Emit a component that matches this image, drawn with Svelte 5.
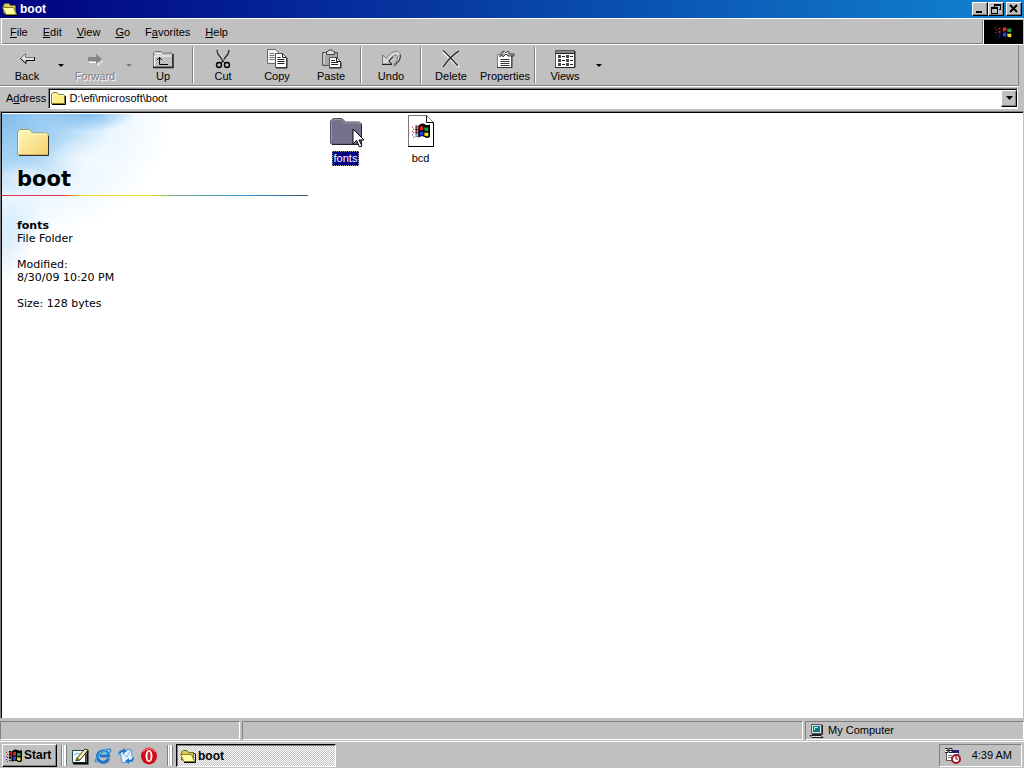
<script>
  const menus = [
    ['', 'F', 'ile'],
    ['', 'E', 'dit'],
    ['', 'V', 'iew'],
    ['', 'G', 'o'],
    ['F', 'a', 'vorites'],
    ['', 'H', 'elp']
  ];
  const tools = [
    { id: 'back', label: 'Back', drop: true },
    { id: 'forward', label: 'Forward', drop: true, disabled: true },
    { id: 'up', label: 'Up' },
    { sep: true },
    { id: 'cut', label: 'Cut' },
    { id: 'copy', label: 'Copy' },
    { id: 'paste', label: 'Paste' },
    { sep: true },
    { id: 'undo', label: 'Undo' },
    { sep: true },
    { id: 'delete', label: 'Delete' },
    { id: 'properties', label: 'Properties' },
    { sep: true },
    { id: 'views', label: 'Views', drop: true }
  ];
  const quick = [
    { id: 'desktop', label: 'Show Desktop' },
    { id: 'ie', label: 'Internet Explorer' },
    { id: 'mail', label: 'Outlook Express' },
    { id: 'opera', label: 'Opera' }
  ];
  let path = $state('D:\\efi\\microsoft\\boot');
  let selected = $state('fonts');
</script>

{#snippet smallFolder()}
  <svg width="16" height="16" viewBox="0 0 16 16" aria-hidden="true">
    <path d="M1.5 13.5V4L3 2.500h4L8.500 4.500h5l1 1v8z" fill="#ffee88" stroke="#80762c" />
    <path d="M2.500 12V5.500L3.500 4h3L8 5.500h5" fill="none" stroke="#fffbd0" />
    <path d="M2 14.500h13.500V6" fill="none" stroke="#000" />
  </svg>
{/snippet}

{#snippet openFolder()}
  <svg width="16" height="16" viewBox="0 0 16 16" aria-hidden="true">
    <path d="M1.500 12V4L3 2.500h4L8.500 4.500h5v8z" fill="#d8cc50" stroke="#77702c" />
    <path d="M.5 6.500h11l3 7H4z" fill="#ffffa0" stroke="#8b812d" />
    <path d="M4 14.500h11.500V6l-2-1" fill="none" stroke="#000" />
  </svg>
{/snippet}

{#snippet flag(size)}
  <svg width={size} height={size} viewBox="0 0 16 16" aria-hidden="true">
    <path d="M5.500 3.500C8 1 10 1 11.500 2S14 3 16 2v11c-2 1.500-3 1.500-4.500.5s-3-1.500-6 .5z" fill="#000" />
    <path d="M7 4.500C8 3.700 9 3.500 10 4v3.500c-1-.5-2-.4-3 .3z" fill="#e82820" />
    <path d="M11 4.500c1 .6 2 .7 3.500.2v3.200c-1.500.5-2.500.3-3.500-.4z" fill="#20a040" />
    <path d="M7 9c1-.7 2-.8 3-.4v3.500c-1-.5-2-.4-3 .2z" fill="#2444e8" />
    <path d="M11 9c1 .7 2 .8 3.500.3v3.200c-1.500.4-2.500.2-3.500-.5z" fill="#f4e02c" />
    <path d="M3 4h2v2H3zM3 7h2v2H3z" fill="#b02030" />
    <path d="M3 10h2v1H3zM3 12h2v1H3z" fill="#2030a0" />
    <path d="M0 4h1v1H0zM1 6h1v1H1zM0 8h1v1H0z" fill="#c03040" />
    <path d="M0 11h1v1H0zM1 13h1v1H1zM1 9h1v1H1z" fill="#2030a0" />
    <path d="M3 3h2v1H3zM3 6h2v1H3zM3 9h2v1H3z" fill="#000" />
  </svg>
{/snippet}

{#snippet toolIcon(id)}
  <svg class="tool-icon" width="22" height="20" viewBox="0 0 22 20" aria-hidden="true">
    {#if id === 'back'}
      <path d="M5 9.500 10 4.500v3.500h8v3h-8v4z" fill="#e0e0e0" />
      <path d="M9.500 4.500 4.500 9.500M9.500 5v3.500h8" fill="none" stroke="#777" />
      <path d="m4.500 9.500 5.500 5v-3h8.500V8" fill="none" stroke="#000" />
    {:else if id === 'forward'}
      <path d="m19 11.500-5 5v-3H6v-4h1" fill="none" stroke="#fff" />
      <path d="M4 8h8V5l6 5-6 5v-3H4z" fill="#858585" />
    {:else if id === 'up'}
      <path d="M1.500 18V4L3 2.500h6L10.500 4h9L20.500 5v13z" fill="#c0c0c0" stroke="#777" />
      <path d="M2.500 17V7h17" fill="none" stroke="#fff" />
      <path d="M3 4.500h6l1 1" fill="none" stroke="#fff" />
      <path d="M1 18.500h20V5" fill="none" stroke="#222" stroke-width="1.500" />
      <path d="M7.500 8.500v7H14M5 11l2.500-2.500L10 11M14 15.500h2" fill="none" stroke="#000" />
    {:else if id === 'cut'}
      <path d="m5 1 1 4 7 9M17 1l-1 4-7 9" fill="none" stroke="#333" stroke-width="1.500" />
      <path d="m6 2 7 11" stroke="#eee" stroke-width=".7" />
      <ellipse cx="7" cy="16" rx="2.500" ry="2.500" fill="none" stroke="#000" stroke-width="1.400" />
      <ellipse cx="15" cy="16" rx="2.500" ry="2.500" fill="none" stroke="#000" stroke-width="1.400" />
    {:else if id === 'copy'}
      <path d="M1.500.5h8l4 4v10h-12z" fill="#f4f4f4" stroke="#666" />
      <path d="M3.500 4.500h5m-5 2h5m-5 2h5m-5 2h5" stroke="#777" />
      <path d="M9.500 4.500h7l4 4v10h-11z" fill="#fff" stroke="#555" />
      <path d="M16.500 4.500v4h4M10 19h11V9M11.500 8.500h3m-3 2h7m-7 2h7m-7 2h7" fill="none" stroke="#222" />
    {:else if id === 'paste'}
      <path d="M2.500 3.500h15v13h-15z" fill="#a8a8a8" stroke="#555" />
      <path d="M4 15V5h11" fill="none" stroke="#e4e4e4" />
      <path d="M6.500 5.500v-3H8l1-1.500h3l1 1.500h1.500v3z" fill="#ddd" stroke="#444" />
      <path d="M9.500 8.500h7l4 4v6h-11z" fill="#fff" stroke="#555" />
      <path d="M16.500 8.500v4h4M9 19h12v-6M11 11.500h4m-4 2h7m-7 2h7" fill="none" stroke="#222" />
    {:else if id === 'undo'}
      <path d="M2.500 6v9h9L8.500 12c4-6 9-8 9-4 0 3-1 5-3 7 4-2 6-5 6-8 0-7-9-6-14 2.500z" fill="#d8d8d8" stroke="#777" />
      <path d="M2 15.500h10l-3-3.500 4-4M14 17c4-3 7-7 6-11" fill="none" stroke="#222" />
    {:else if id === 'delete'}
      <path d="M3 2c4 4 9 9 16 16M19 2C13 6 8 11 3 18" fill="none" stroke="#fff" stroke-width="2.500" />
      <path d="M3 1.500c5 4 9 9 15 15.500M19 2C12 6 8 11 3 18" fill="none" stroke="#333" stroke-width="1.500" />
    {:else if id === 'properties'}
      <path d="M3.500 5.500h14v13h-14z" fill="#fff" stroke="#777" />
      <path d="M3 18.500h15V7M6.500 10.500h9m-9 2h9m-9 2h9m-9 2h9" fill="none" stroke="#333" />
      <path d="m6 6 3-4 3 2 2-2 2 3h4v2h-6l-2-2-3 3-1-2-2 2z" fill="#aaa" stroke="#444" />
      <path d="m10 3 2 2 2-2" fill="none" stroke="#fff" />
    {:else}
      <path d="M1.500 1.500h19v17h-19z" fill="#fff" stroke="#555" />
      <path d="M2 2h18v2H2z" fill="#888" />
      <path d="M2 4.500h18M1 18.500h20V2M8 7.500h3m-3 4h3m-3 4h3m5-8h3m-3 4h3m-3 4h3" stroke="#222" fill="none" />
      <path d="M4 6h3v3H4zm0 4h3v3H4zm0 4h3v3H4zm8-8h3v3h-3zm0 4h3v3h-3zm0 4h3v3h-3z" fill="#444" />
    {/if}
  </svg>
{/snippet}

{#snippet quickIcon(id)}
  <svg width="18" height="18" viewBox="0 0 18 18" aria-hidden="true">
    {#if id === 'desktop'}
      <path d="M1.500 3.500h13v12h-13z" fill="#f8ffff" stroke="#245" />
      <path d="M2 16.500h14.500V3" stroke="#000" stroke-width="2" fill="none" />
      <path d="M3 8q3-3 6-1t6-2" stroke="#72b9d0" fill="none" />
      <path d="m6 11 8-9 3 1-8 10-4 1z" fill="#fff0a0" stroke="#333" />
      <path d="m4 14 2-4 3 3z" fill="#5a7c20" />
    {:else if id === 'ie'}
      <path d="M14.500 11.500c-2 6-11 4.500-11-2 0-6.500 10-8 11-.5H6" fill="none" stroke="#1c75c8" stroke-width="3" />
      <path d="M5 8c1-4 6-4 8-1" fill="none" stroke="#63c8f5" stroke-width="1.500" />
      <path d="M3 15C-3 16 8 3 15 2c3 0 2 2 0 4" fill="none" stroke="#3b94d5" stroke-width="1.500" />
    {:else if id === 'mail'}
      <path d="m3 4 11-2 2 12-11 2z" fill="#e0f2ff" stroke="#5a96ce" />
      <path d="m3 4 7 6 4-8" fill="none" stroke="#82b4df" />
      <path d="M1 9c0-4 2-6 5-6V1l4 3-4 3V5C4 5 3 6 1 9zm16 1c0 4-2 5-5 5v2l-4-3 4-3v2c2 0 3-1 5-3z" fill="#2675cf" />
    {:else}
      <ellipse cx="9" cy="9" rx="8" ry="8.500" fill="#cf0c16" />
      <path d="M3 5c3-5 10-4 12 0" stroke="#f56a65" stroke-width="1.500" fill="none" />
      <ellipse cx="9" cy="9" rx="3.500" ry="6" fill="#fff" />
      <ellipse cx="9" cy="9" rx="1.500" ry="4.500" fill="#cf1c20" />
    {/if}
  </svg>
{/snippet}

{#snippet bigFolder(dim)}
  <svg width="34" height="32" viewBox="0 0 34 32" aria-hidden="true">
    <defs>
      <linearGradient id="folder-fill" x1="0" y1="0" x2="1" y2="1">
        <stop offset="0" stop-color="#fffbc0" /><stop offset="1" stop-color="#f5cf68" />
      </linearGradient>
    </defs>
    <path d="M1.500 28V6L4 3.500h9L16.500 7h14l2 2v19l-1 1h-29z" fill={dim ? '#74718a' : 'url(#folder-fill)'} stroke={dim ? '#55526a' : '#a39850'} />
    <path d="M2.500 27V7l2-2.500H13l3 3.500h15" fill="none" stroke={dim ? '#9692a6' : '#fffde0'} />
    <path d="M3 29.500h29.500V10" fill="none" stroke={dim ? '#222034' : '#30302c'} />
  </svg>
{/snippet}

<div class="desktop">
  <main class="window">
    <header class="titlebar">
      {@render openFolder()}
      <h1>boot</h1>
      <div class="window-controls">
        <button class="raised" aria-label="Minimize"><svg width="12" height="10" viewBox="0 0 12 10"><path d="M2 7h6v2H2z" /></svg></button>
        <button class="raised" aria-label="Restore"><svg width="12" height="10" viewBox="0 0 12 10"><path d="M4 0h7v6H9V5h1V2H5v1H4zM1 3h7v7H1zm1 2v4h5V5z" fill-rule="evenodd" /></svg></button>
        <button class="raised close" aria-label="Close"><svg width="12" height="10" viewBox="0 0 12 10"><path d="m2 1 7 7M9 1 2 8" stroke="#000" stroke-width="2" /></svg></button>
      </div>
    </header>

    <div class="menu-row">
      <nav aria-label="Menu">
        {#each menus as m}<button>{m[0]}<u>{m[1]}</u>{m[2]}</button>{/each}
      </nav>
      <div class="throbber">{@render flag(18)}</div>
    </div>

    <div class="toolbar" role="toolbar" aria-label="Standard buttons">
      {#each tools as t}
        {#if t.sep}
          <span class="separator"></span>
        {:else}
          <button class="tool" disabled={t.disabled}>{@render toolIcon(t.id)}<span>{t.label}</span></button>
          {#if t.drop}
            <button class="drop" disabled={t.disabled} aria-label={t.label + ' list'}><svg width="6" height="3" viewBox="0 0 6 3"><path d="M0 0h6L3 3z" fill="currentColor" /></svg></button>
          {/if}
        {/if}
      {/each}
    </div>

    <div class="address-row">
      <label for="address">A<u>d</u>dress</label>
      <div class="combo">
        {@render smallFolder()}
        <input id="address" type="text" bind:value={path} spellcheck="false" />
        <button class="raised" aria-label="Address list"><svg width="7" height="4" viewBox="0 0 7 4"><path d="M0 0h7L3.500 4z" /></svg></button>
      </div>
    </div>

    <div class="view">
      <aside>
        <div class="banner">
          {@render bigFolder(false)}
          <h2>boot</h2>
        </div>
        <div class="rainbow"></div>
        <div class="details">
          <p><strong>fonts</strong><br />File Folder</p>
          <p>Modified:<br />8/30/09 10:20 PM</p>
          <p>Size: 128 bytes</p>
        </div>
      </aside>
      <section class="files" aria-label="Files">
        <button class="file" class:selected={selected === 'fonts'} onclick={() => (selected = 'fonts')}>
          {@render bigFolder(selected === 'fonts')}
          <span>fonts</span>
          <svg class="pointer" width="13" height="21" viewBox="0 0 13 21" aria-hidden="true"><path d="M1 1v15l3.500-3.500L7.500 19l2.500-1-3-6h5z" fill="#fff" stroke="#000" /></svg>
        </button>
        <button class="file" class:selected={selected === 'bcd'} onclick={() => (selected = 'bcd')}>
          <span class="document">
            <svg width="34" height="32" viewBox="0 0 34 32" aria-hidden="true"><path d="M4.500.5h18l7 7v24h-25z" fill="#fff" stroke="#777" /><path d="M22.500.5v7h7M4 31.500h25.500V8" fill="none" stroke="#000" /></svg>
            <i>{@render flag(18)}</i>
          </span>
          <span>bcd</span>
        </button>
      </section>
    </div>

    <footer class="status">
      <div></div>
      <div></div>
      <div>
        <svg width="16" height="16" viewBox="0 0 16 16" aria-hidden="true"><path d="M2.500 1.500h10v9h-10z" fill="#e0e0e0" stroke="#555" /><path d="M4 3h7v6H4z" fill="#087c80" /><path d="M5 4h4v1H6v2H5z" fill="#9ff" /><path d="M3 11.500h10.500V2M1 12.500h11l2 2H3z" fill="none" stroke="#222" /><path d="M3 13.500h9" stroke="#fff" stroke-dasharray="1 1" /></svg>
        My Computer
      </div>
    </footer>
  </main>

  <footer class="taskbar">
    <button class="start raised">{@render flag(16)}Start</button>
    <span class="grip"></span>
    <nav class="quick" aria-label="Quick launch">
      {#each quick as q}<button aria-label={q.label}>{@render quickIcon(q.id)}</button>{/each}
    </nav>
    <span class="grip"></span>
    <button class="task">{@render openFolder()}boot</button>
    <div class="tray">
      <svg width="18" height="17" viewBox="0 0 18 17" aria-hidden="true"><path d="M2.500 3.500h12v10h-12z" fill="#fff" stroke="#555" /><path d="M7 3h8v3H7z" fill="#202070" /><path d="M1 1h3v5H1zm4 0h3v5H5z" fill="#fff" /><path d="M1 1.500h3v4H1m1-2h2m1-2h3v4H5v-4m0 2h3" fill="none" stroke="#222" /><path d="M4 8.500h4m-4 2h4" stroke="#777" /><circle cx="12" cy="12" r="4" fill="#fff" stroke="#a01525" stroke-width="2" /><path d="M12 9v3h2" fill="none" stroke="#600" /></svg>
      <time>4:39 AM</time>
    </div>
  </footer>
</div>

<style>
  :global(body) { margin: 0; background: #c0c0c0; }
  .desktop, .desktop * { box-sizing: border-box; }
  .desktop {
    height: 100vh;
    display: flex;
    flex-direction: column;
    background: #c0c0c0;
    color: #000;
    font: 11px/13px "Liberation Sans", Arial, sans-serif;
    cursor: default;
    overflow: hidden;
  }
  svg { display: block; flex: none; }
  button { font: inherit; color: inherit; margin: 0; padding: 0; border: 0; background: none; }
  .window { flex: 1; min-height: 0; display: flex; flex-direction: column; }
  .raised {
    background: #c0c0c0;
    border: 1px solid;
    border-color: #fff #000 #000 #fff;
    box-shadow: inset -1px -1px #808080;
  }

  .titlebar {
    height: 18px;
    flex: none;
    display: flex;
    align-items: center;
    gap: 2px;
    padding: 0 2px;
    color: #fff;
    background: linear-gradient(90deg, #000080, #1084d0);
  }
  h1 { flex: 1; margin: 0; font-size: 12px; line-height: 16px; }
  .window-controls { display: flex; }
  .window-controls button { width: 16px; height: 14px; display: flex; align-items: center; justify-content: center; }
  .window-controls .close { margin-left: 2px; }

  .menu-row {
    height: 27px;
    flex: none;
    display: flex;
    margin: 0 1px;
    padding-top: 1px;
    border-top: 1px solid #fff;
    border-left: 1px solid #fff;
    border-bottom: 1px solid #fff;
    box-shadow: inset 0 -1px #808080;
  }
  .menu-row nav { flex: 1; display: flex; align-items: center; gap: 1px; padding-left: 1px; border-right: 1px solid #808080; }
  .menu-row nav button { padding: 0 7px; }
  u { text-underline-offset: 1px; }
  .throbber { width: 40px; display: grid; place-items: center; background: #000; border-left: 1px solid #fff; }

  .toolbar {
    height: 41px;
    flex: none;
    display: flex;
    margin-right: 5px;
    padding: 2px 0;
    border-right: 1px solid #808080;
    border-bottom: 1px solid #808080;
    box-shadow: 0 1px #fff;
  }
  .tool { width: 54px; display: flex; flex-direction: column; align-items: center; gap: 1px; padding-top: 2px; }
  .tool:disabled { color: #808080; text-shadow: 1px 1px #fff; }
  .drop { width: 14px; display: grid; place-items: center; }
  .drop:disabled { color: #808080; }
  .separator { width: 2px; margin: 0 2px; border-left: 1px solid #808080; border-right: 1px solid #fff; }

  .address-row {
    height: 24px;
    flex: none;
    display: flex;
    align-items: center;
    gap: 2px;
    padding: 0 6px;
  }
  .combo {
    flex: 1;
    height: 21px;
    display: flex;
    align-items: center;
    gap: 3px;
    padding: 0 0 0 1px;
    background: #fff;
    border: 1px solid;
    border-color: #808080 #fff #fff #808080;
    box-shadow: inset 1px 1px #000;
  }
  input { flex: 1; min-width: 0; font: inherit; padding: 0; border: 0; outline: 0; background: transparent; color: #000; }
  .combo button { width: 16px; height: 17px; display: grid; place-items: center; }

  .view {
    flex: 1;
    min-height: 0;
    display: flex;
    margin-top: 1px;
    background: #fff;
    border: 1px solid;
    border-color: #808080 #c0c0c0 #c0c0c0 #808080;
    box-shadow: inset 1px 1px #000;
    padding: 2px 0 0 1px;
  }
  aside {
    width: 306px;
    flex: none;
    font: 11px/13px Verdana, "DejaVu Sans", sans-serif;
    background:
      radial-gradient(ellipse 40px 22px at 82px 44px, #fff9, #fff0),
      radial-gradient(ellipse 26px 12px at 22px 62px, #fff8, #fff0),
      radial-gradient(ellipse 50px 18px at 84px 0, #87c1ef 10%, #87c1ef00),
      radial-gradient(ellipse 170px 130px at 0 0, #82bdec 0, #a6d3f5 35%, #eaf6ff 65%, #fff0),
      radial-gradient(ellipse 50px 170px at 0 0, #a9d6f9 40%, #fff0);
  }
  .banner { padding: 12px 14px 0; }
  h2 { margin: 6px 0 0 1px; font-size: 21px; line-height: 30px; }
  .rainbow {
    height: 1px;
    margin-top: 1px;
    background-image: linear-gradient(to right, #e83048 0%, #e83048 20%, #f8d820 26%, #f8d820 48%, #78b878 55%, #3890d8 78%, #305b80 100%);
  }
  .details { padding: 23px 15px; }
  .details p { margin: 0 0 13px; }
  .files { flex: 1; display: flex; align-items: flex-start; }
  .file { position: relative; width: 75px; display: flex; flex-direction: column; align-items: center; gap: 4px; padding-top: 1px; }
  .file > span:not(.document) { padding: 0 1px; border: 1px solid transparent; }
  .file.selected > span:not(.document) { color: #fff; background: #000080; border: 1px dotted #9c9c88; }
  .pointer { position: absolute; left: 44px; top: 14px; }
  .document { display: grid; place-items: center; }
  .document > * { grid-area: 1 / 1; }

  .status { height: 22px; flex: none; display: flex; gap: 2px; padding: 2px 0 1px; }
  .status div { display: flex; align-items: center; gap: 3px; padding: 0 3px; border: 1px solid; border-color: #808080 #fff #fff #808080; }
  .status div:nth-child(1) { width: 240px; }
  .status div:nth-child(2) { flex: 1; }
  .status div:nth-child(3) { width: 219px; }

  .taskbar {
    height: 27px;
    flex: none;
    display: flex;
    align-items: stretch;
    gap: 4px;
    padding: 2px 2px 1px;
    border-top: 1px solid #fff;
  }
  .start { width: 55px; display: flex; align-items: center; gap: 2px; padding-left: 3px; font-weight: bold; font-size: 12px; }
  .grip { width: 5px; margin: 1px 0; border-left: 1px solid #808080; border-right: 2px solid #fff; box-shadow: 1px 0 #808080, inset 1px 0 #fff; }
  .quick { display: flex; align-items: center; gap: 5px; padding: 0 1px; margin-right: 4px; }
  .task {
    width: 160px;
    display: flex;
    align-items: center;
    gap: 2px;
    padding: 1px 0 0 3px;
    font-weight: bold;
    font-size: 12px;
    border: 1px solid;
    border-color: #000 #fff #fff #000;
    box-shadow: inset 1px 1px #808080;
    background: repeating-conic-gradient(#c0c0c0 0 25%, #fff 0 50%) 0 0 / 2px 2px;
  }
  .tray { width: 83px; margin-left: auto; display: flex; align-items: center; justify-content: space-between; padding: 0 9px 0 4px; border: 1px solid; border-color: #808080 #fff #fff #808080; }
</style>
